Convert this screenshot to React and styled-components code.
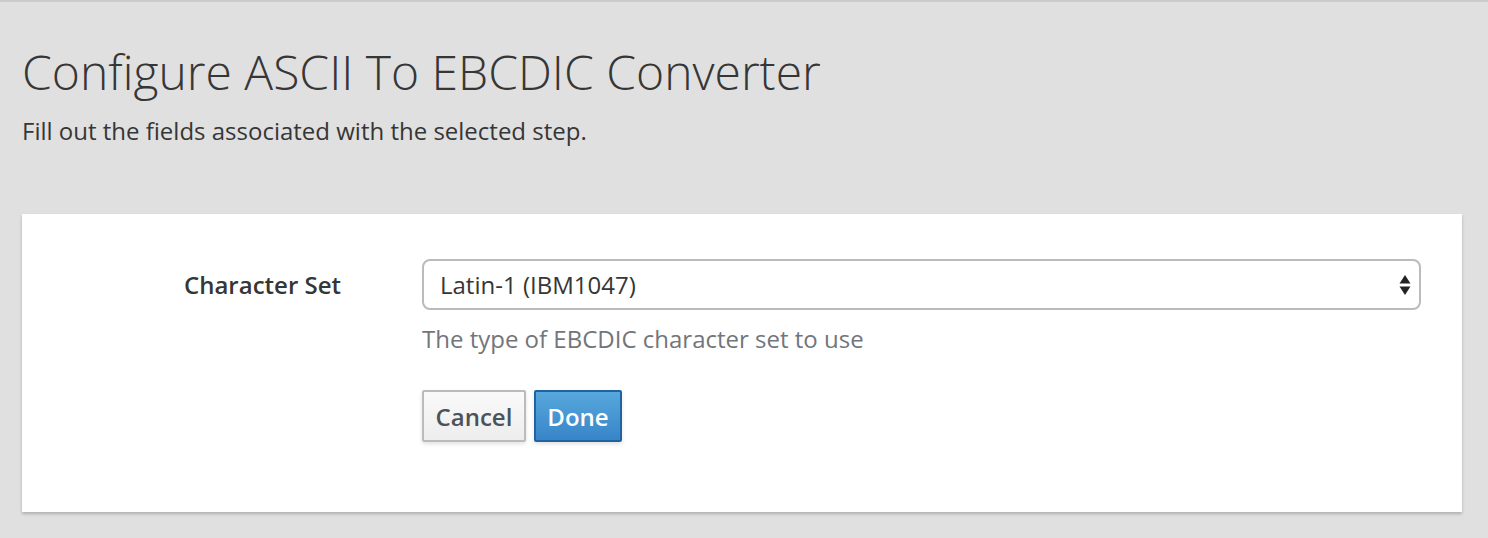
import React from "react";
import styled, { createGlobalStyle } from "styled-components";

const Global = createGlobalStyle`
  html, body { margin: 0; padding: 0; }
  body {
    background: #e0e0e0;
    font-family: "Open Sans", "Noto Sans", sans-serif;
    color: #363636;
  }
`;

const Page = styled.div`
  width: 1488px;
  height: 538px;
  box-sizing: border-box;
  border-top: 2px solid #cbcbcb;
  padding: 0 26px 0 22px;
  display: flex;
  flex-direction: column;
`;

const Header = styled.header`
  padding-top: 38px;
`;

const Title = styled.h1`
  margin: 0;
  font-size: 48px;
  font-weight: 300;
  line-height: 64px;
  color: #363636;
`;

const Subtitle = styled.p`
  margin: 11px 0 0;
  font-size: 24px;
  line-height: 32px;
  color: #363636;
`;

const Card = styled.section`
  margin-top: 67px;
  background: #fff;
  box-shadow: 0 2px 3px rgba(0, 0, 0, 0.22);
  padding: 45px 41px 70px 0;
  display: grid;
  grid-template-columns: 319px 1fr;
  column-gap: 81px;
`;

const Label = styled.label`
  text-align: right;
  font-size: 24px;
  font-weight: 600;
  line-height: 51px;
  color: #363636;
`;

const Field = styled.div`
  display: flex;
  flex-direction: column;
`;

const SelectBox = styled.div`
  position: relative;
  height: 51px;
  box-sizing: border-box;
  border: 2px solid #bbbbbb;
  border-radius: 8px;
  display: flex;
  align-items: center;
  padding-left: 16px;
  font-size: 24px;
  color: #363636;
`;

const Arrows = styled.svg`
  position: absolute;
  right: 8px;
  top: 50%;
  transform: translateY(-50%);
`;

const Help = styled.div`
  margin-top: 13px;
  font-size: 24px;
  line-height: 32px;
  color: #72767b;
`;

const Actions = styled.div`
  margin-top: 35px;
  display: flex;
  gap: 8px;
`;

const Button = styled.button`
  height: 52px;
  box-sizing: border-box;
  padding: 0 11.5px;
  font-family: inherit;
  font-size: 24px;
  font-weight: 600;
  border-radius: 2px;
  border: 2px solid ${(p) => (p.$primary ? "#1f64a0" : "#bbbbbb")};
  background: ${(p) =>
    p.$primary
      ? "linear-gradient(#57a8dd, #3785c8)"
      : "linear-gradient(#fafafa, #ededed)"};
  color: ${(p) => (p.$primary ? "#fff" : "#4d5258")};
  box-shadow: 0 2px 4px rgba(0, 0, 0, 0.12);
`;

export default function App() {
  return (
    <>
      <Global />
      <Page>
        <Header>
          <Title>Configure ASCII To EBCDIC Converter</Title>
          <Subtitle>Fill out the fields associated with the selected step.</Subtitle>
        </Header>
        <Card>
          <Label>Character Set</Label>
          <Field>
            <SelectBox>
              Latin-1 (IBM1047)
              <Arrows width="12" height="22" viewBox="0 0 12 22">
                <path d="M6 1 L11.5 9.5 H0.5 Z" fill="#222" />
                <path d="M6 21 L11.5 12.5 H0.5 Z" fill="#222" />
              </Arrows>
            </SelectBox>
            <Help>The type of EBCDIC character set to use</Help>
            <Actions>
              <Button>Cancel</Button>
              <Button $primary>Done</Button>
            </Actions>
          </Field>
        </Card>
      </Page>
    </>
  );
}
